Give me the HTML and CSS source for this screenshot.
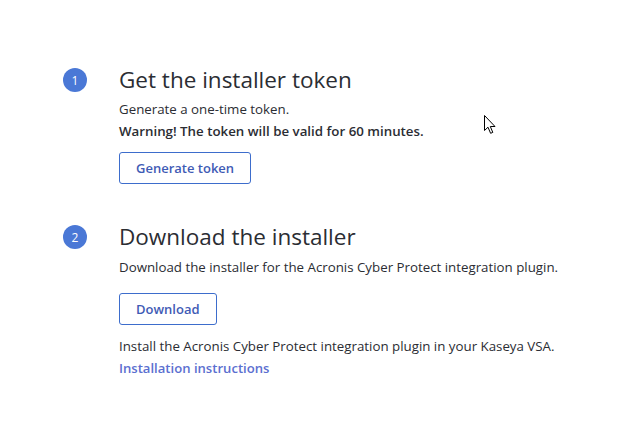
FILE: index.html
```html
<!DOCTYPE html>
<html>
<head>
<meta charset="utf-8">
<link rel="stylesheet" href="styles.css">
</head>
<body>
<div class="page">
  <section class="step step-one">
    <div class="badge">1</div>
    <div class="content">
      <h2 class="title">Get the installer token</h2>
      <p class="text">Generate a one-time token.</p>
      <p class="text warn">Warning! The token will be valid for 60 minutes.</p>
      <button class="btn">Generate token</button>
    </div>
  </section>
  <section class="step step-two">
    <div class="badge">2</div>
    <div class="content">
      <h2 class="title">Download the installer</h2>
      <p class="text">Download the installer for the Acronis Cyber Protect integration plugin.</p>
      <button class="btn">Download</button>
      <p class="text after">Install the Acronis Cyber Protect integration plugin in your Kaseya VSA.</p>
      <a class="link" href="#">Installation instructions</a>
    </div>
  </section>
</div>
<svg class="cursor" width="12" height="20" viewBox="0 0 12 20">
  <path d="M0.5 0.5 L0.5 15.5 L4 12.2 L6.6 18.3 L8.8 17.4 L6.3 11.5 L11 11.5 Z" fill="#fff" stroke="#000" stroke-width="1" stroke-linejoin="miter"/>
</svg>
</body>
</html>
```
FILE: styles.css
```css
* { box-sizing: border-box; }
html, body { margin: 0; padding: 0; background: #fff; }
body {
  font-family: "Open Sans", "Noto Sans", sans-serif;
  color: #2b2d33;
  width: 618px;
  height: 442px;
  position: relative;
  overflow: hidden;
}
.page {
  padding: 66px 0 0 63px;
  display: flex;
  flex-direction: column;
  gap: 39px;
}
.step { display: flex; gap: 32px; }
.badge {
  width: 24px;
  height: 24px;
  border-radius: 50%;
  background: #4a78d6;
  color: #fff;
  font-size: 12px;
  font-weight: 400;
  display: flex;
  align-items: center;
  justify-content: center;
  margin-top: 2px;
  flex: none;
}
.content { display: flex; flex-direction: column; align-items: flex-start; }
.title {
  margin: 0;
  font-size: 22.5px;
  font-weight: 400;
  line-height: 28px;
  color: #2b2d33;
}
.text {
  margin: 0;
  font-size: 13.3px;
  line-height: 22px;
}
.step-one .title { margin-bottom: 4px; }
.warn { font-weight: 600; }
.btn {
  margin-top: 10px;
  height: 32px;
  padding: 0 16px;
  border: 1px solid #3d6dcc;
  border-radius: 3px;
  background: #fff;
  color: #3f5bb5;
  font-family: inherit;
  font-size: 13px;
  font-weight: 600;
}
.step-two .title { margin-bottom: 5px; }
.step-two .btn { margin-top: 15px; }
.after { margin-top: 10px; }
.link {
  margin-top: 1px;
  font-size: 13.1px;
  line-height: 20px;
  font-weight: 600;
  color: #5b6fd0;
  text-decoration: none;
}
.cursor { position: absolute; left: 484px; top: 115px; }
```
